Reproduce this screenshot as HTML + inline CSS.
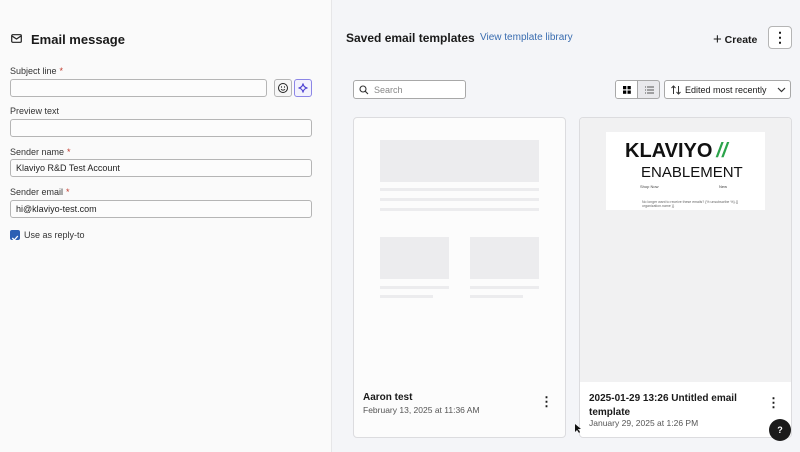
<!DOCTYPE html>
<html><head><style>
*{box-sizing:border-box;margin:0;padding:0}
body{width:800px;height:452px;overflow:hidden;font-family:"Liberation Sans",sans-serif;background:#f4f5f8;position:relative;color:#1a1a1a}
.abs{position:absolute}
.left{left:0;top:0;width:332px;height:452px;background:#fafafa;border-right:1px solid #e6e6e8}
.lbl{font-size:9px;color:#333}
.req{color:#c0392b;margin-left:3px}
.inp{height:18px;border:1px solid #b5b5b5;border-radius:3px;background:#fcfcfc;font-size:9px;padding:3px 5px;color:#222}
.card{background:#fcfcfc;border:1px solid #dcdcdf;border-radius:4px}
.ph{background:#ececee}
</style></head><body>
<div class="abs left">
  <svg class="abs" style="left:11px;top:34px" width="11" height="9" viewBox="0 0 11 9"><rect x="0.7" y="0.7" width="9.6" height="7.6" rx="1" fill="none" stroke="#222" stroke-width="1.2"/><path d="M1 2l4.5 3L10 2" fill="none" stroke="#222" stroke-width="1.2"/></svg>
  <div class="abs" style="left:31px;top:32px;font-size:13px;font-weight:bold">Email message</div>
  <div class="abs lbl" style="left:10px;top:66px">Subject line<span class="req">*</span></div>
  <div class="abs inp" style="left:10px;top:79px;width:257px"></div>
  <div class="abs" style="left:274px;top:79px;width:18px;height:18px;border:1px solid #b5b5b5;border-radius:3px;background:#f6f6f6"><svg width="16" height="16" viewBox="0 0 16 16"><circle cx="8" cy="8" r="4.5" fill="none" stroke="#222"/><circle cx="6.5" cy="7" r=".6"/><circle cx="9.5" cy="7" r=".6"/><path d="M6 9.2q2 2 4 0" fill="none" stroke="#222" stroke-width=".8"/></svg></div>
  <div class="abs" style="left:294px;top:79px;width:18px;height:18px;border:1px solid #8c86e6;border-radius:3px;background:#f3f2fd"><svg width="16" height="16" viewBox="0 0 16 16"><path d="M8 3.5Q8.5 7.5 12.5 8Q8.5 8.5 8 12.5Q7.5 8.5 3.5 8Q7.5 7.5 8 3.5Z" fill="none" stroke="#4b3fd1" stroke-width="1.1"/></svg></div>
  <div class="abs lbl" style="left:10px;top:106px">Preview text</div>
  <div class="abs inp" style="left:10px;top:119px;width:302px"></div>
  <div class="abs lbl" style="left:10px;top:147px">Sender name<span class="req">*</span></div>
  <div class="abs inp" style="left:10px;top:159px;width:302px">Klaviyo R&amp;D Test Account</div>
  <div class="abs lbl" style="left:10px;top:187px">Sender email<span class="req">*</span></div>
  <div class="abs inp" style="left:10px;top:200px;width:302px">hi@klaviyo-test.com</div>
  <div class="abs" style="left:10px;top:230px;width:10px;height:10px;background:#2b5fb4;border-radius:2px"><svg width="10" height="10" viewBox="0 0 10 10"><path d="M2.3 5l2 2 3.5-4" fill="none" stroke="#fff" stroke-width="1.3"/></svg></div>
  <div class="abs lbl" style="left:24px;top:230px">Use as reply-to</div>
</div>
<div class="abs" style="left:346px;top:31px;font-size:12px;font-weight:bold">Saved email templates</div>
<div class="abs" style="left:480px;top:32px;font-size:10px;color:#3a6db0">View template library</div>
<div class="abs" style="left:713px;top:30px;font-size:10.5px;font-weight:bold"><span style="font-size:15px;font-weight:normal;position:relative;top:1px">+</span> Create</div>
<div class="abs" style="left:768px;top:26px;width:24px;height:23px;border:1px solid #b5b5b5;border-radius:4px;background:#fff;text-align:center;font-size:14px;font-weight:bold;line-height:20px">⋮</div>
<div class="abs" style="left:353px;top:80px;width:113px;height:19px;border:1px solid #a8a8a8;border-radius:3px;background:#fff;font-size:9px;color:#888;padding:4px 0 0 20px">Search
<svg class="abs" style="left:5px;top:4px" width="10" height="10" viewBox="0 0 10 10"><circle cx="4" cy="4" r="3" fill="none" stroke="#333" stroke-width="1.1"/><path d="M6.2 6.2L9 9" stroke="#333" stroke-width="1.1"/></svg></div>
<div class="abs" style="left:615px;top:80px;width:45px;height:19px;border:1px solid #a8a8a8;border-radius:3px;background:#e9e9ec;overflow:hidden">
 <div style="width:22px;height:17px;background:#fff;border-right:1px solid #a8a8a8;position:relative"><svg class="abs" style="left:7px;top:5px" width="8" height="8"><rect width="3.3" height="3.3"/><rect x="4.5" width="3.3" height="3.3"/><rect y="4.5" width="3.3" height="3.3"/><rect x="4.5" y="4.5" width="3.3" height="3.3"/></svg></div>
 <svg class="abs" style="left:29px;top:5px" width="9" height="8"><path d="M0 1h1M2 1h7M0 4h1M2 4h7M0 7h1M2 7h7" stroke="#555"/></svg>
</div>
<div class="abs" style="left:664px;top:80px;width:127px;height:19px;border:1px solid #a8a8a8;border-radius:3px;background:#fff;font-size:9px;padding:4px 0 0 20px">Edited most recently
<svg class="abs" style="left:6px;top:4px" width="10" height="10"><path d="M2.5 9V1M0.5 3l2-2 2 2M7.5 1v8M5.5 7l2 2 2-2" fill="none" stroke="#333"/></svg>
<svg class="abs" style="left:112px;top:6px" width="9" height="6"><path d="M1 1l3.5 3.5L8 1" fill="none" stroke="#333" stroke-width="1.2"/></svg></div>

<div class="abs card" style="left:353px;top:117px;width:213px;height:321px">
 <div class="abs ph" style="left:26px;top:22px;width:159px;height:42px"></div>
 <div class="abs ph" style="left:26px;top:70px;width:159px;height:3px"></div>
 <div class="abs ph" style="left:26px;top:80px;width:159px;height:3px"></div>
 <div class="abs ph" style="left:26px;top:90px;width:159px;height:3px"></div>
 <div class="abs ph" style="left:26px;top:119px;width:69px;height:42px"></div>
 <div class="abs ph" style="left:116px;top:119px;width:69px;height:42px"></div>
 <div class="abs ph" style="left:26px;top:168px;width:69px;height:3px"></div>
 <div class="abs ph" style="left:26px;top:177px;width:53px;height:3px"></div>
 <div class="abs ph" style="left:116px;top:168px;width:69px;height:3px"></div>
 <div class="abs ph" style="left:116px;top:177px;width:53px;height:3px"></div>
 <div class="abs" style="left:9px;top:274px;font-size:10px;font-weight:bold">Aaron test</div>
 <div class="abs" style="left:9px;top:287px;font-size:8.5px;color:#555">February 13, 2025 at 11:36 AM</div>
 <div class="abs" style="left:186px;top:276px;font-size:13px;font-weight:bold">⋮</div>
</div>
<div class="abs card" style="left:579px;top:117px;width:213px;height:321px;overflow:hidden;background:#fff">
 <div class="abs" style="left:0;top:0;width:213px;height:264px;background:#f1f1f2"></div>
 <div class="abs" style="left:26px;top:14px;width:159px;height:78px;background:#fff">
  <div class="abs" style="left:19px;top:8px;font-size:20px;font-weight:bold;color:#111">KLAVIYO<span style="color:#2ba34a;font-style:italic;margin-left:4px">//</span></div>
  <div class="abs" style="left:35px;top:32px;font-size:15px;color:#111">ENABLEMENT</div>
  <div class="abs" style="left:34px;top:52px;font-size:4px;color:#444">Shop Now</div>
  <div class="abs" style="left:113px;top:52px;font-size:4px;color:#444">New</div>
  <div class="abs" style="left:36px;top:68px;font-size:3.5px;color:#666;width:100px">No longer want to receive these emails? {% unsubscribe %} {{ organization.name }}</div>
 </div>
 <div class="abs" style="left:9px;top:274px;font-size:10px;font-weight:bold;line-height:13.5px;width:170px">2025-01-29 13:26 Untitled email template</div>
 <div class="abs" style="left:9px;top:300px;font-size:8.5px;color:#555">January 29, 2025 at 1:26 PM</div>
 <div class="abs" style="left:187px;top:277px;font-size:13px;font-weight:bold">⋮</div>
</div>
<div class="abs" style="left:769px;top:419px;width:22px;height:22px;border-radius:50%;background:#1b1b1b;color:#fff;font-size:9px;font-weight:bold;text-align:center;line-height:22px">?</div>
<svg class="abs" style="left:575px;top:424px" width="7" height="10"><path d="M0 0v8l2-2 2 3 1-1-2-3h3z" fill="#111"/></svg>
</body></html>
